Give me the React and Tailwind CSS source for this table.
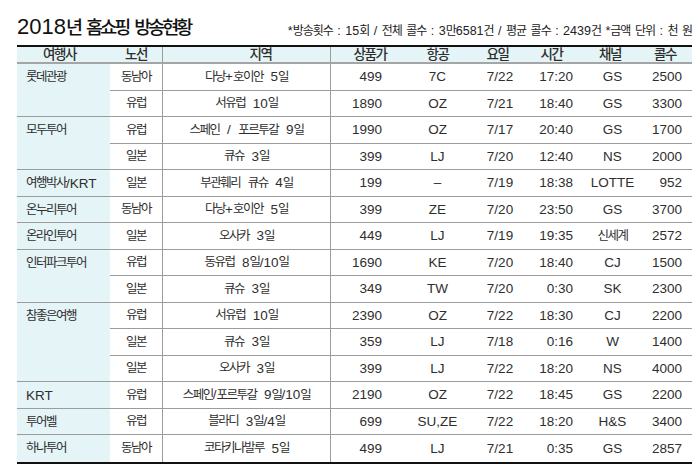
import React from "react";

const HANGUL = /([\uAC00-\uD7A3]+)/;

function K({ t, h }) {
  const parts = String(t).split(HANGUL);
  return parts.map((p, i) =>
    /[\uAC00-\uD7A3]/.test(p) ? (
      <span key={i} className={h}>
        {p}
      </span>
    ) : (
      <span key={i}>{p}</span>
    )
  );
}

const BODY_H = "text-[12.5px] tracking-[-1.5px]";
const HEAD_H = "text-[13.5px] tracking-[-1.5px] font-medium";

const groups = [
  {
    name: "롯데관광",
    rows: [
      ["동남아", "다낭+호이안  5일", "499", "7C", "7/22", "17:20", "GS", "2500"],
      ["유럽", "서유럽  10일", "1890", "OZ", "7/21", "18:40", "GS", "3300"],
    ],
  },
  {
    name: "모두투어",
    rows: [
      ["유럽", "스페인  /  포르투갈  9일", "1990", "OZ", "7/17", "20:40", "GS", "1700"],
      ["일본", "큐슈  3일", "399", "LJ", "7/20", "12:40", "NS", "2000"],
    ],
  },
  {
    name: "여행박사/KRT",
    rows: [["일본", "부관훼리  큐슈  4일", "199", "–", "7/19", "18:38", "LOTTE", "952"]],
  },
  {
    name: "온누리투어",
    rows: [["동남아", "다낭+호이안  5일", "399", "ZE", "7/20", "23:50", "GS", "3700"]],
  },
  {
    name: "온라인투어",
    rows: [["일본", "오사카  3일", "449", "LJ", "7/19", "19:35", "신세계", "2572"]],
  },
  {
    name: "인터파크투어",
    rows: [
      ["유럽", "동유럽  8일/10일", "1690", "KE", "7/20", "18:40", "CJ", "1500"],
      ["일본", "큐슈  3일", "349", "TW", "7/20", "0:30", "SK", "2300"],
    ],
  },
  {
    name: "참좋은여행",
    rows: [
      ["유럽", "서유럽  10일", "2390", "OZ", "7/22", "18:30", "CJ", "2200"],
      ["일본", "큐슈  3일", "359", "LJ", "7/18", "0:16", "W", "1400"],
      ["일본", "오사카  3일", "399", "LJ", "7/22", "18:20", "NS", "4000"],
    ],
  },
  {
    name: "KRT",
    rows: [["유럽", "스페인/포르투갈  9일/10일", "2190", "OZ", "7/22", "18:45", "GS", "2200"]],
  },
  {
    name: "투어벨",
    rows: [["유럽", "블라디  3일/4일", "699", "SU,ZE", "7/22", "18:20", "H&S", "3400"]],
  },
  {
    name: "하나투어",
    rows: [["동남아", "코타키나발루  5일", "499", "LJ", "7/21", "0:35", "GS", "2857"]],
  },
];

const SPAN = { 1: "row-span-1", 2: "row-span-2", 3: "row-span-3" };

const cellAlign = [
  "justify-center",
  "justify-center whitespace-pre",
  "justify-end pr-[23px]",
  "justify-center",
  "justify-center",
  "justify-end pr-[7px]",
  "justify-center",
  "justify-end pr-[10px]",
];

const cellBorderR = ["border-r border-[#9c9c9c]", "border-r border-[#9c9c9c]", "", "", "", "", "", ""];

export default function App() {
  const cells = [];
  groups.forEach((g, gi) => {
    const lastGroup = gi === groups.length - 1;
    g.rows.forEach((r, ri) => {
      const lastRow = lastGroup && ri === g.rows.length - 1;
      if (ri === 0) {
        cells.push(
          <div
            key={`n${gi}`}
            className={`${SPAN[g.rows.length]} bg-[#e5f4f6] ${lastGroup ? "" : "border-b border-[#9c9c9c]"}`}
          >
            <div className="h-[26.5px] flex items-center pl-[9px]">
              <K t={g.name} h={BODY_H} />
            </div>
          </div>
        );
      }
      r.forEach((c, ci) => {
        cells.push(
          <div
            key={`c${gi}-${ri}-${ci}`}
            className={`flex items-center ${cellAlign[ci]} ${cellBorderR[ci]} ${lastRow ? "" : "border-b border-b-[#9c9c9c]"}`}
          >
            <K t={c} h={BODY_H} />
          </div>
        );
      });
    });
  });

  return (
    <div className="w-[700px] h-[471px] bg-white pl-[17px] pr-[8px] font-['Liberation_Sans','Noto_Sans_CJK_KR',sans-serif] text-[#2e2e2e] leading-none overflow-hidden">
      <div className="h-[45px] flex items-end justify-between pb-[7px]">
        <div className="text-[22px] font-medium text-[#111] leading-none">
          <K t="2018년 홈쇼핑 방송현황" h="text-[18.5px] tracking-[-3px]" />
        </div>
        <div className="text-[12.5px] leading-none mb-[1px] text-[#222] [word-spacing:1px]">
          <K
            t="*방송횟수 : 15회 / 전체 콜수 : 3만6581건 / 평균 콜수 : 2439건 *금액 단위 : 천 원"
            h="text-[12px] tracking-[-1px]"
          />
        </div>
      </div>
      <div className="border-t-2 border-t-[#111] border-b-2 border-b-[#111]">
        <div className="grid grid-cols-[93px_53px_168px_74px_65px_60px_50px_65px_47px] h-[17px] bg-[#e5f4f6] border-b-2 border-b-[#a5a5a5]">
          <div className="flex items-center justify-center pr-[8px]"><K t="여행사" h={HEAD_H} /></div>
          <div className="flex items-center justify-center border-r border-[#9c9c9c]"><K t="노선" h={HEAD_H} /></div>
          <div className="flex items-center justify-center pl-[28px] border-r border-[#9c9c9c]"><K t="지역" h={HEAD_H} /></div>
          <div className="flex items-center justify-center pl-[4px]"><K t="상품가" h={HEAD_H} /></div>
          <div className="flex items-center justify-center"><K t="항공" h={HEAD_H} /></div>
          <div className="flex items-center justify-center pr-[5px]"><K t="요일" h={HEAD_H} /></div>
          <div className="flex items-center justify-center pr-[7px]"><K t="시간" h={HEAD_H} /></div>
          <div className="flex items-center justify-center pr-[5px]"><K t="채널" h={HEAD_H} /></div>
          <div className="flex items-center justify-center pr-[7px]"><K t="콜수" h={HEAD_H} /></div>
        </div>
        <div className="grid grid-cols-[93px_53px_168px_74px_65px_60px_50px_65px_47px] grid-rows-[repeat(15,26.53px)] text-[13.5px]">
          {cells}
        </div>
      </div>
    </div>
  );
}
